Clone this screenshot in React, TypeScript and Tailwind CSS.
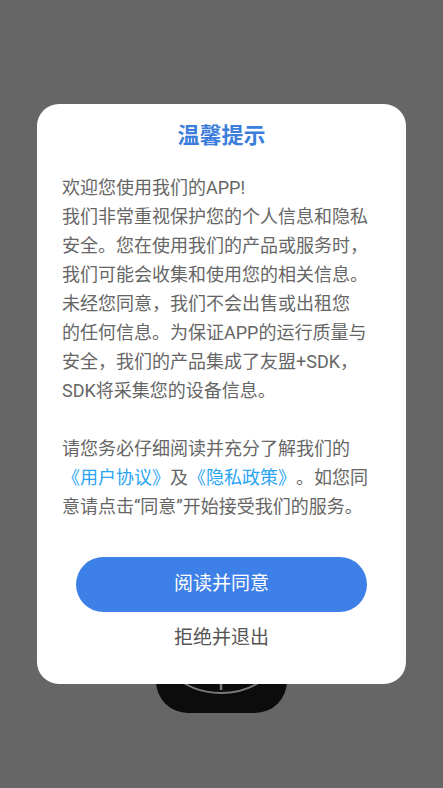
import React from "react";

const font = { fontFamily: '"Roboto", "Noto Sans CJK SC", sans-serif' };

const AppLogo = () => (
  <svg width="131" height="131" viewBox="0 0 131 131">
    <rect x="0" y="0" width="131" height="131" rx="32" fill="#0c0c0c" />
    <circle cx="65" cy="38" r="73" fill="none" stroke="#7a7a7a" strokeWidth="2" />
    <line x1="65" y1="96" x2="65" y2="108" stroke="#7a7a7a" strokeWidth="2.5" />
  </svg>
);

export default function App() {
  return (
    <div className="relative h-screen w-full overflow-hidden bg-[#666666]" style={font}>
      {/* splash page under the dim layer */}
      <div className="flex h-full flex-col items-center justify-end pb-[75px]">
        <AppLogo />
      </div>

      {/* privacy dialog */}
      <div className="absolute inset-0 flex items-center justify-center">
        <div className="w-[369px] rounded-[22px] bg-white px-[25px] pt-[17px] pb-[33px] [text-spacing-trim:space-all]">
          <h2 className="text-center text-[22px] font-bold leading-[30px] text-[#3c7edc]">
            温馨提示
          </h2>

          <p className="mt-[22px] text-[18px] leading-[29px] text-[#666666]">
            欢迎您使用我们的APP!
            <br />
            我们非常重视保护您的个人信息和隐私
            <br />
            安全。您在使用我们的产品或服务时，
            <br />
            我们可能会收集和使用您的相关信息。
            <br />
            未经您同意，我们不会出售或出租您
            <br />
            的任何信息。为保证APP的运行质量与
            <br />
            安全，我们的产品集成了友盟+SDK，
            <br />
            SDK将采集您的设备信息。
            <br />
            <br />
            请您务必仔细阅读并充分了解我们的
            <br />
            <span className="text-[#2aa4f4]">《用户协议》</span>及
            <span className="text-[#2aa4f4]">《隐私政策》</span>。如您同
            <br />
            意请点击“同意”开始接受我们的服务。
          </p>

          <div className="mt-[36px] flex flex-col items-center">
            <button className="h-[55px] w-[291px] rounded-full bg-[#3d80e8] text-[19px] text-white">
              阅读并同意
            </button>
            <button className="mt-[13px] h-[26px] text-[19px] leading-[26px] text-[#555555]">
              拒绝并退出
            </button>
          </div>
        </div>
      </div>
    </div>
  );
}
